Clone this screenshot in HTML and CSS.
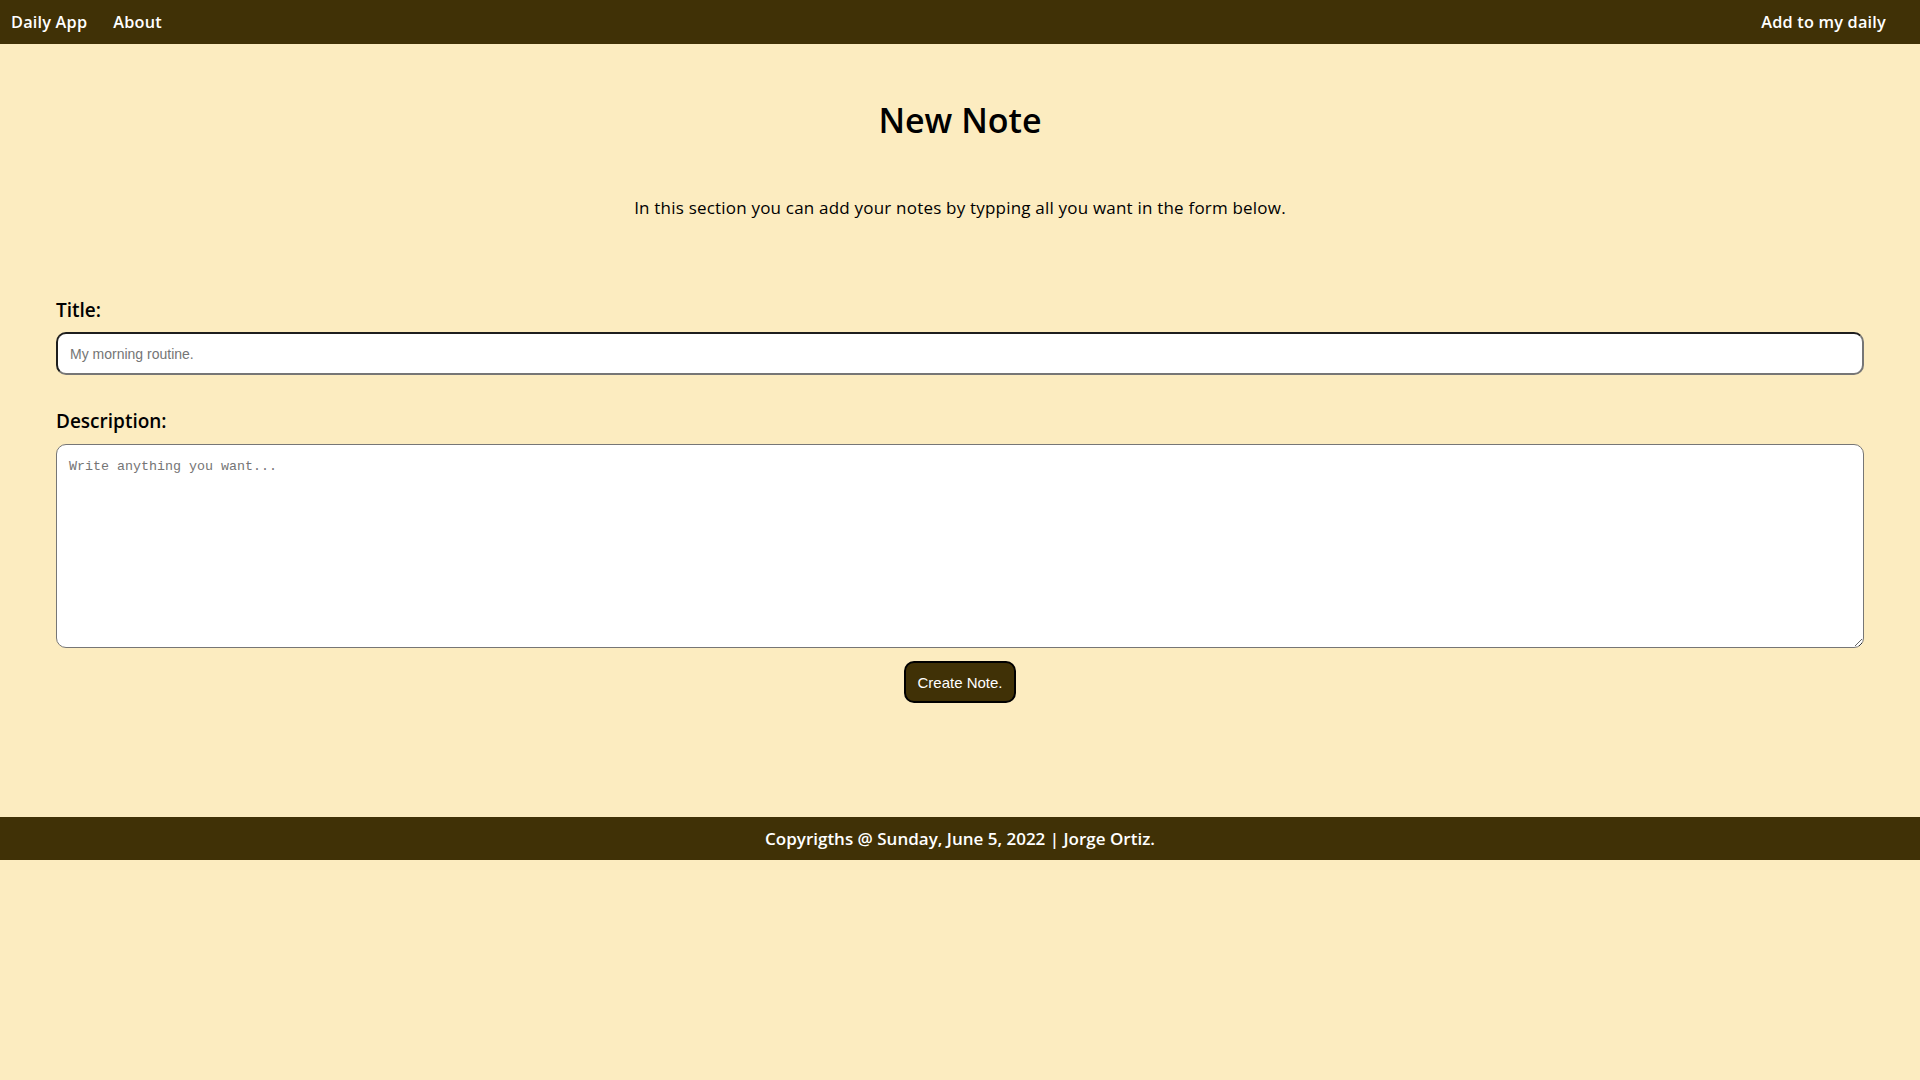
FILE: index.html
```html
<!DOCTYPE html>
<html lang="en">
<head>
<meta charset="utf-8">
<title>Daily App - New Note</title>
<link rel="stylesheet" href="styles.css">
</head>
<body>
<nav class="navbar">
  <div class="nav-left">
    <a class="nav-link" href="#">Daily App</a>
    <a class="nav-link" href="#">About</a>
  </div>
  <a class="nav-link nav-right" href="#">Add to my daily</a>
</nav>
<main class="content">
  <h1 class="page-title">New Note</h1>
  <p class="intro">In this section you can add your notes by typping all you want in the form below.</p>
  <form class="note-form">
    <label class="field-label" for="title">Title:</label>
    <input class="title-input" id="title" type="text" placeholder="My morning routine.">
    <label class="field-label desc-label" for="desc">Description:</label>
    <textarea class="desc-input" id="desc" placeholder="Write anything you want..."></textarea>
    <div class="actions">
      <button class="create-btn" type="button">Create Note.</button>
    </div>
  </form>
</main>
<footer class="footer">Copyrigths @ Sunday, June 5, 2022 | Jorge Ortiz.</footer>
</body>
</html>
```
FILE: styles.css
```css
html, body {
  margin: 0;
  padding: 0;
  background: #fcecc0;
  font-family: "Trebuchet MS", "Open Sans", sans-serif;
  color: #000;
}

.navbar {
  height: 44px;
  background: #403106;
  display: flex;
  align-items: center;
  justify-content: space-between;
  padding: 0 34px 0 11px;
}

.nav-left {
  display: flex;
  gap: 26px;
}

.nav-link {
  color: #fff;
  text-decoration: none;
  font-weight: 600;
  font-size: 16.3px;
  letter-spacing: 0.2px;
  line-height: 20px;
  margin-top: -1px;
}

.content {
  padding: 0 56px;
}

.page-title {
  margin: 56px 0 0;
  text-align: center;
  font-size: 34px;
  line-height: 40px;
  font-weight: 600;
}

.intro {
  margin: 58px 0 0;
  text-align: center;
  font-size: 17px;
  letter-spacing: 0.2px;
  line-height: 20px;
}

.note-form {
  display: flex;
  flex-direction: column;
  margin-top: 81px;
}

.field-label {
  font-size: 19px;
  line-height: 22px;
  font-weight: 600;
}

.title-input {
  margin-top: 11px;
  height: 43px;
  box-sizing: border-box;
  border: 2px solid #1e1e1e;
  border-bottom-color: #767676;
  border-right-color: #767676;
  border-radius: 10px;
  background: #fff;
  padding: 0 12px;
  font-family: "Liberation Sans", Arial, sans-serif;
  font-size: 14px;
}

.title-input::placeholder {
  color: #757575;
}

.desc-label {
  margin-top: 35px;
}

.desc-input {
  margin-top: 12px;
  height: 204px;
  box-sizing: border-box;
  border: 1px solid #767676;
  border-radius: 10px;
  background: #fff;
  padding: 14px 12px;
  font-family: "Liberation Mono", monospace;
  font-size: 13.33px;
  resize: vertical;
}

.desc-input::placeholder {
  color: #757575;
}

.actions {
  display: flex;
  justify-content: center;
  margin-top: 13px;
}

.create-btn {
  width: 112px;
  height: 42px;
  background: #403106;
  color: #fff;
  border: 2px solid #000;
  border-radius: 10px;
  font-family: "Liberation Sans", Arial, sans-serif;
  font-size: 15px;
  cursor: pointer;
}

.footer {
  margin-top: 114px;
  height: 43px;
  background: #403106;
  color: #fff;
  font-weight: 600;
  font-size: 17px;
  display: flex;
  align-items: center;
  justify-content: center;
}
```
